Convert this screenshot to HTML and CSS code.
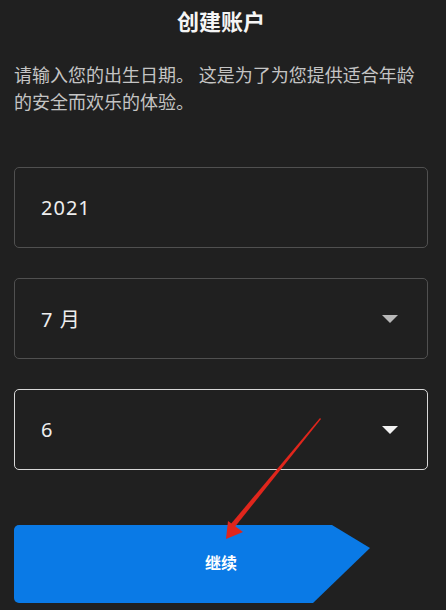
FILE: index.html
```html
<!DOCTYPE html>
<html lang="zh-CN">
<head>
    <meta charset="UTF-8">
    <meta name="viewport" content="width=device-width, initial-scale=1.0">
    <title>创建账户</title>
    <link rel="stylesheet" href="styles.css">
</head>
<body>
    <div class="page">
        <h1 class="title">创建账户</h1>
        <p class="intro">请输入您的出生日期。 这是为了为您提供适合年龄的安全而欢乐的体验。</p>

        <div class="field">
            <span class="value">2021</span>
        </div>
        <div class="field">
            <span class="value">7 月</span>
            <span class="caret"></span>
        </div>
        <div class="field active">
            <span class="value">6</span>
            <span class="caret"></span>
        </div>

        <button class="next" type="button">继续</button>
    </div>

    <!-- annotation arrow drawn over the page -->
    <svg class="pointer" width="446" height="610" viewBox="0 0 446 610">
        <polygon points="320,418 321,419 234,528 230,525" fill="#e0261c"/>
        <polygon points="226,539 228,521 243,532" fill="#e0261c"/>
    </svg>
</body>
</html>
```

FILE: styles.css
```css
body {
    margin: 0;
    background-color: #202020;
    font-family: "Noto Sans", "Noto Sans CJK SC", sans-serif;
    color: #fff;
}
.page {
    padding: 0 18px 0 14px;
    display: flex;
    flex-direction: column;
}
.title {
    margin: 6px 0 0;
    font-size: 22px;
    line-height: 30px;
    font-weight: 700;
    text-align: center;
    color: #f5f5f5;
}
.intro {
    margin: 26px 0 0;
    font-size: 18px;
    line-height: 27px;
    color: #c4c4c4;
}
.field {
    height: 79px;
    margin-top: 30px;
    padding: 0 26px;
    border: 1px solid #505050;
    border-radius: 5px;
    display: flex;
    align-items: center;
    justify-content: space-between;
}
.field:first-of-type {
    margin-top: 51px;
}
.field.active {
    border-color: #d8d8d8;
}
.value {
    font-size: 20px;
    letter-spacing: 1px;
    color: #eee;
}
.caret {
    width: 0;
    height: 0;
    margin-right: 3px;
    border-left: 8px solid transparent;
    border-right: 8px solid transparent;
    border-top: 8px solid #b8b8b8;
}
.field.active .caret {
    border-top-color: #f2f2f2;
}
.next {
    margin-top: 55px;
    height: 78px;
    padding: 0 0 5px;
    border: none;
    border-radius: 5px;
    background: #0a7ae6;
    color: #fff;
    font-family: inherit;
    font-size: 16px;
    font-weight: 700;
    clip-path: polygon(0 0, 318px 0, 356px 23px, 299px 100%, 0 100%);
}
.pointer {
    position: absolute;
    top: 0;
    left: 0;
    pointer-events: none;
}
```
